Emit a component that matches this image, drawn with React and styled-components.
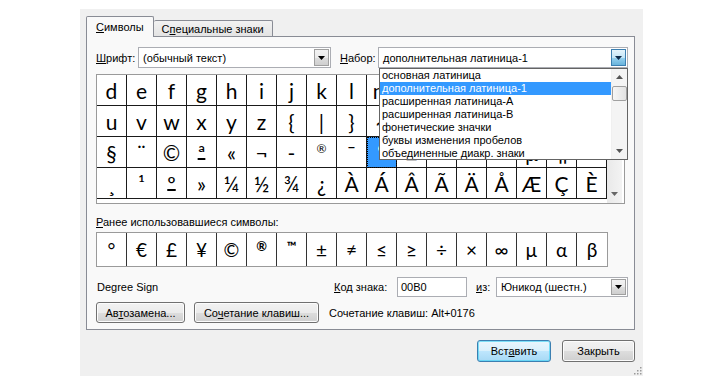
import React from "react";
import styled, { createGlobalStyle } from "styled-components";

const GlobalStyle = createGlobalStyle`
  html, body { margin: 0; padding: 0; background: #fff; }
  body {
    font-family: "Liberation Sans", Arial, sans-serif;
    font-size: 11px;
    color: #000;
  }
  u { text-decoration: underline; text-underline-offset: 1px; }
`;

const GRID = [
  ["d", "e", "f", "g", "h", "i", "j", "k", "l", "m", "n", "o", "p", "q", "r", "s", "t"],
  ["u", "v", "w", "x", "y", "z", "{", "|", "}", "~", "\u00a0", "¡", "¢", "£", "¤", "¥", "¦"],
  ["§", "¨", "©", "ª", "«", "¬", "-", "®", "¯", "°", "±", "²", "³", "´", "µ", "¶", "·"],
  ["¸", "¹", "º", "»", "¼", "½", "¾", "¿", "À", "Á", "Â", "Ã", "Ä", "Å", "Æ", "Ç", "È"],
];

const RECENT = ["°", "€", "£", "¥", "©", "®", "™", "±", "≠", "≤", "≥", "÷", "×", "∞", "µ", "α", "β"];
const SMALL = ["®", "™"];
const ORDINAL = ["ª", "º"];

const SETS = [
  "основная латиница",
  "дополнительная латиница-1",
  "расширенная латиница-A",
  "расширенная латиница-B",
  "фонетические значки",
  "буквы изменения пробелов",
  "объединенные диакр. знаки",
];

const Dialog = styled.div`
  position: relative;
  box-sizing: border-box;
  margin: 9px 0 0 80px;
  width: 563px;
  height: 367px;
  padding: 7px 8px 0 6px;
  background: #f0f0f0;
  display: flex;
  flex-direction: column;
`;

const TabStrip = styled.div`
  display: flex;
  align-items: flex-end;
  height: 21px;
  margin-bottom: -1px;
  position: relative;
  z-index: 1;
`;

const Tab = styled.div`
  box-sizing: border-box;
  display: flex;
  align-items: center;
  height: ${(p) => (p.$active ? 21 : 16)}px;
  margin-bottom: ${(p) => (p.$active ? 0 : 1)}px;
  padding: 0 ${(p) => (p.$active ? 9 : 8)}px;
  border: 1px solid #898c95;
  border-bottom: none;
  border-left: ${(p) => (p.$active ? "1px solid #898c95" : "none")};
  border-radius: 2px 2px 0 0;
  background: ${(p) =>
    p.$active ? "#f9f9f9" : "linear-gradient(#f2f2f2, #e3e3e3)"};
`;

const Panel = styled.div`
  box-sizing: border-box;
  width: 549px;
  height: 294px;
  border: 1px solid #898c95;
  background: #f9f9f9;
  padding: 10px 6px 0 9px;
  display: flex;
  flex-direction: column;
`;

const FontRow = styled.div`
  display: flex;
  align-items: center;
  height: 21px;
`;

const Label = styled.span`
  width: ${(p) => p.$w}px;
  margin-left: ${(p) => p.$ml || 0}px;
  white-space: nowrap;
  flex: none;
`;

const ComboWrap = styled.div`
  position: relative;
  width: ${(p) => p.$w}px;
  height: ${(p) => p.$h || 21}px;
  flex: none;
`;

const Combo = styled.div`
  box-sizing: border-box;
  display: flex;
  align-items: center;
  width: 100%;
  height: 100%;
  border: 1px solid #abadb3;
  background: #fff;
  padding: 1px;
`;

const ComboText = styled.span`
  flex: 1;
  padding-left: 3px;
  white-space: nowrap;
  overflow: hidden;
`;

const DropBtn = styled.div`
  box-sizing: border-box;
  width: 15px;
  height: 100%;
  display: flex;
  align-items: center;
  justify-content: center;
  border: 1px solid ${(p) => (p.$hot ? "#3c7fb1" : "#a0a0a0")};
  background: ${(p) =>
    p.$hot
      ? "linear-gradient(#e5f4fc 0%, #c4e5f6 50%, #98d1ef 51%, #68b3db 100%)"
      : "linear-gradient(#f2f2f2 0%, #ebebeb 50%, #dddddd 51%, #cfcfcf 100%)"};
`;

const DropList = styled.div`
  position: absolute;
  top: 100%;
  left: 1px;
  right: 0;
  height: 92px;
  box-sizing: border-box;
  border: 1px solid #646464;
  background: #fff;
  display: flex;
  z-index: 5;
`;

const Items = styled.div`
  flex: 1;
`;

const Item = styled.div`
  height: 13px;
  line-height: 13px;
  padding-left: 2px;
  white-space: nowrap;
  color: ${(p) => (p.$sel ? "#fff" : "#000")};
  background: ${(p) => (p.$sel ? "#3399ff" : "transparent")};
`;

const VScroll = styled.div`
  width: 15px;
  flex: none;
  display: flex;
  flex-direction: column;
  align-items: center;
  background: #f4f4f4;
  border-left: 1px solid #f0f0f0;
`;

const Arrow = styled.div`
  height: ${(p) => p.$h || 16}px;
  display: flex;
  align-items: center;
  justify-content: center;
  flex: none;
`;

const Thumb = styled.div`
  box-sizing: border-box;
  width: 15px;
  height: 15px;
  margin-top: 1px;
  border: 1px solid #a0a0a0;
  border-radius: 2px;
  background: linear-gradient(90deg, #f6f6f6, #e2e2e2);
`;

const Spacer = styled.div`
  flex: 1;
`;

const GridBox = styled.div`
  margin-top: 6px;
  width: 527px;
  display: flex;
  border: 1px solid #9a9a9a;
  background: #fff;
`;

const Cells = styled.div`
  display: grid;
  grid-template-columns: repeat(17, 30px);
  grid-auto-rows: 31px;
  padding-bottom: 4px;
`;

const Cell = styled.div`
  box-sizing: border-box;
  display: flex;
  align-items: center;
  justify-content: center;
  border-right: 1px solid #1a1a1a;
  border-bottom: 1px solid #1a1a1a;
  font-family: Lato, "Open Sans", sans-serif;
  font-size: ${(p) => (p.$small ? 12 : 21)}px;
  padding-bottom: ${(p) => (p.$small ? 8 : 0)}px;
  text-decoration: ${(p) => (p.$ord ? "underline" : "none")};
  text-decoration-thickness: 1.5px;
  text-underline-offset: -3px;
  color: ${(p) => (p.$sel ? "#fff" : "#000")};
  background: ${(p) => (p.$sel ? "#3399ff" : "#fff")};
  outline: ${(p) => (p.$sel ? "1px dotted #000" : "none")};
  outline-offset: -1px;
`;

const GridScroll = styled.div`
  width: 15px;
  display: flex;
  flex-direction: column;
  background: linear-gradient(90deg, #e9e9e9, #f3f3f3);
`;

const SectionLabel = styled.div`
  margin-top: 11px;
  height: 14px;
  line-height: 14px;
`;

const RecentRow = styled.div`
  margin-top: 3px;
  width: 510px;
  display: flex;
  border: 1px solid #9a9a9a;
  background: #fff;
`;

const RecentCell = styled.div`
  box-sizing: border-box;
  width: 30px;
  height: 33px;
  display: flex;
  align-items: center;
  justify-content: center;
  border-right: ${(p) => (p.$last ? "none" : "1px solid #333")};
  font-family: Lato, "Open Sans", sans-serif;
  font-size: ${(p) => (p.$small ? 13 : 19)}px;
  font-weight: ${(p) => (p.$small ? 700 : 400)};
  padding-bottom: ${(p) => (p.$small ? 8 : 0)}px;
`;

const InfoRow = styled.div`
  margin-top: 10px;
  height: 20px;
  display: flex;
  align-items: center;
`;

const Name = styled.span`
  flex: 1;
  padding-left: 1px;
`;

const Field = styled.div`
  box-sizing: border-box;
  width: ${(p) => p.$w}px;
  height: 20px;
  border: 1px solid #abadb3;
  background: #fff;
  display: flex;
  align-items: center;
  padding-left: 3px;
  flex: none;
`;

const ButtonRow = styled.div`
  margin-top: 5px;
  display: flex;
  align-items: center;
  gap: 9px;
`;

const Button = styled.div`
  box-sizing: border-box;
  width: ${(p) => p.$w}px;
  height: ${(p) => p.$h || 21}px;
  display: flex;
  align-items: center;
  justify-content: center;
  border: 1px solid ${(p) => (p.$focus ? "#3c7fb1" : "#707070")};
  border-radius: 3px;
  background: ${(p) =>
    p.$focus
      ? "linear-gradient(#eaf6fd 0%, #d9f0fc 50%, #bee6fd 51%, #a7d9f5 100%)"
      : "linear-gradient(#f2f2f2 0%, #ebebeb 50%, #dddddd 51%, #cfcfcf 100%)"};
  box-shadow: inset 0 0 0 1px ${(p) => (p.$focus ? "#48d4f5aa" : "#fcfcfc")};
  white-space: nowrap;
  flex: none;
`;

const Hint = styled.span`
  margin-left: 1px;
  white-space: nowrap;
`;

const Footer = styled.div`
  margin-top: 10px;
  display: flex;
  justify-content: flex-end;
  gap: 11px;
`;

const Grip = styled.svg`
  position: absolute;
  right: 1px;
  bottom: 1px;
`;

function Tri({ up, color = "#000" }) {
  return (
    <svg width="7" height="4" viewBox="0 0 7 4">
      <path d={up ? "M0 4 L3.5 0 L7 4 Z" : "M0 0 L7 0 L3.5 4 Z"} fill={color} />
    </svg>
  );
}

export default function App() {
  return (
    <>
      <GlobalStyle />
      <Dialog>
        <TabStrip>
          <Tab $active>
            <span>
              <u>С</u>имволы
            </span>
          </Tab>
          <Tab>
            <span>
              С<u>п</u>ециальные знаки
            </span>
          </Tab>
        </TabStrip>
        <Panel>
          <FontRow>
            <Label $w={42}>
              <u>Ш</u>рифт:
            </Label>
            <ComboWrap $w={193}>
              <Combo>
                <ComboText>(обычный текст)</ComboText>
                <DropBtn>
                  <Tri />
                </DropBtn>
              </Combo>
            </ComboWrap>
            <Label $w={38} $ml={9}>
              <u>Н</u>абор:
            </Label>
            <ComboWrap $w={250}>
              <Combo>
                <ComboText>дополнительная латиница-1</ComboText>
                <DropBtn $hot>
                  <Tri color="#0c2a4a" />
                </DropBtn>
              </Combo>
              <DropList>
                <Items>
                  {SETS.map((s, i) => (
                    <Item key={s} $sel={i === 1}>
                      {s}
                    </Item>
                  ))}
                </Items>
                <VScroll>
                  <Arrow $h={16}>
                    <Tri up color="#555" />
                  </Arrow>
                  <Thumb />
                  <Spacer />
                  <Arrow $h={16}>
                    <Tri color="#555" />
                  </Arrow>
                </VScroll>
              </DropList>
            </ComboWrap>
          </FontRow>

          <GridBox>
            <Cells>
              {GRID.flatMap((row, r) =>
                row.map((ch, c) => (
                  <Cell
                    key={`${r}-${c}`}
                    $sel={r === 2 && c === 9}
                    $small={SMALL.includes(ch)}
                    $ord={ORDINAL.includes(ch)}
                  >
                    {ch}
                  </Cell>
                ))
              )}
            </Cells>
            <GridScroll>
              <Spacer />
              <Arrow $h={18}>
                <Tri color="#666" />
              </Arrow>
            </GridScroll>
          </GridBox>

          <SectionLabel>
            <u>Р</u>анее использовавшиеся символы:
          </SectionLabel>
          <RecentRow>
            {RECENT.map((ch, i) => (
              <RecentCell
                key={i}
                $last={i === RECENT.length - 1}
                $small={SMALL.includes(ch)}
              >
                {ch}
              </RecentCell>
            ))}
          </RecentRow>

          <InfoRow>
            <Name>Degree Sign</Name>
            <Label $w={63}>
              <u>К</u>од знака:
            </Label>
            <Field $w={70}>00B0</Field>
            <Label $w={20} $ml={9}>
              <u>и</u>з:
            </Label>
            <ComboWrap $w={132} $h={20}>
              <Combo>
                <ComboText>Юникод (шестн.)</ComboText>
                <DropBtn>
                  <Tri />
                </DropBtn>
              </Combo>
            </ComboWrap>
          </InfoRow>

          <ButtonRow>
            <Button $w={89}>
              <span>
                Ав<u>т</u>озамена...
              </span>
            </Button>
            <Button $w={125}>
              <span>
                Со<u>ч</u>етание клавиш...
              </span>
            </Button>
            <Hint>Сочетание клавиш: Alt+0176</Hint>
          </ButtonRow>
        </Panel>

        <Footer>
          <Button $w={74} $h={22} $focus>
            <span>
              Вст<u>а</u>вить
            </span>
          </Button>
          <Button $w={73} $h={22}>
            Закрыть
          </Button>
        </Footer>

        <Grip width="10" height="10" viewBox="0 0 10 10">
          {[
            [8, 2],
            [5, 5],
            [8, 5],
            [2, 8],
            [5, 8],
            [8, 8],
          ].map(([x, y]) => (
            <rect key={`${x}${y}`} x={x} y={y} width="1.5" height="1.5" fill="#9a9a9a" />
          ))}
        </Grip>
      </Dialog>
    </>
  );
}
